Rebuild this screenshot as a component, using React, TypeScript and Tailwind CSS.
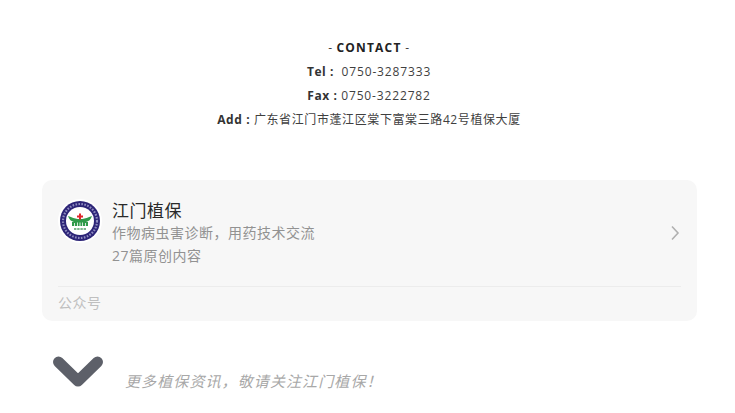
import React from 'react';

const cjk = { fontFamily: '"Open Sans", "Noto Sans CJK SC", sans-serif' };

function Logo() {
  return (
    <svg width="44" height="44" viewBox="0 0 44 44" className="shrink-0">
      <circle cx="22" cy="22" r="22" fill="#ffffff" />
      <circle cx="22" cy="22" r="20" fill="#2c2477" />
      <circle cx="22" cy="22" r="17" fill="none" stroke="#8f8cc0" strokeWidth="2.2" strokeDasharray="1.6 1.4" />
      <circle cx="22" cy="22" r="14" fill="#ffffff" />
      {/* wings */}
      <path d="M10 17 C14 18.5 17 19.5 19.5 20 L24.5 20 C27 19.5 30 18.5 34 17 C33 20.5 30.5 22.5 28 23 L16 23 C13.5 22.5 11 20.5 10 17 Z" fill="#2f9a4a" />
      <path d="M14 23 H30 V27 H14 Z" fill="#2f9a4a" />
      <path d="M16.5 24 V27 M19.5 23.5 V27 M22 23.5 V27 M24.5 23.5 V27 M27.5 24 V27" stroke="#ffffff" strokeWidth="0.8" />
      {/* red cross */}
      <path d="M21 14.5 H23 V16.5 H25 V18.5 H23 V20.5 H21 V18.5 H19 V16.5 H21 Z" fill="#e0262b" />
      <path d="M16 30 H28" stroke="#7db88d" strokeWidth="2.2" strokeDasharray="2.4 0.8" />
    </svg>
  );
}

export default function App() {
  return (
    <div className="w-[735px] h-[413px] overflow-hidden bg-white" style={cjk}>
      {/* contact block */}
      <div className="pt-[36px] pl-[3px] text-center text-[12px] leading-[24px] tracking-[0.6px] text-[#3f3f3f]">
        <p>- <b className="font-bold tracking-[1.2px] text-[#222]">CONTACT</b> -</p>
        <p><b className="font-bold text-[#333]">Tel :</b>&nbsp; <span className="tracking-[0.85px]">0750-3287333</span></p>
        <p><b className="font-bold text-[#333]">Fax :</b> <span className="tracking-[0.85px]">0750-3222782</span></p>
        <p><b className="font-bold text-[#333]">Add :</b> 广东省江门市蓬江区棠下富棠三路42号植保大厦</p>
      </div>

      {/* account card */}
      <div className="mt-[48px] ml-[42px] w-[655px] h-[141px] rounded-[10px] bg-[#f7f7f7] px-[16px] tracking-[0.5px]">
        <div className="h-[107px] flex items-start border-b border-[#ececec]">
          <div className="mt-[19px]"><Logo /></div>
          <div className="ml-[10px] mt-[18px] flex-1">
            <div className="text-[17px] leading-[25px] text-[#2a2a2a]">江门植保</div>
            <div className="text-[14px] leading-[19px] text-[#929292]">作物病虫害诊断，用药技术交流</div>
            <div className="mt-[4px] text-[14px] leading-[19px] text-[#929292]">27篇原创内容</div>
          </div>
          <svg width="12" height="18" viewBox="0 0 12 18" className="mt-[44px]">
            <path d="M3 2.5 L9 9 L3 15.5" fill="none" stroke="#b0b0b0" strokeWidth="1.6" />
          </svg>
        </div>
        <div className="pt-[6px] text-[14px] leading-[19px] text-[#bfbfbf]">公众号</div>
      </div>

      {/* follow line */}
      <div className="mt-[33px] ml-[53px] flex items-start">
        <svg width="50" height="36" viewBox="0 0 50 36" className="shrink-0">
          <path d="M5.5 8 L25 27 L44.5 8" fill="none" stroke="#5d6069" strokeWidth="11" strokeLinecap="round" strokeLinejoin="round" />
        </svg>
        <div className="ml-[22px] mt-[17px] text-[15px] leading-[20px] tracking-[1.1px] italic text-[#a8a8a8]">
          更多植保资讯，敬请关注江门植保！
        </div>
      </div>
    </div>
  );
}
